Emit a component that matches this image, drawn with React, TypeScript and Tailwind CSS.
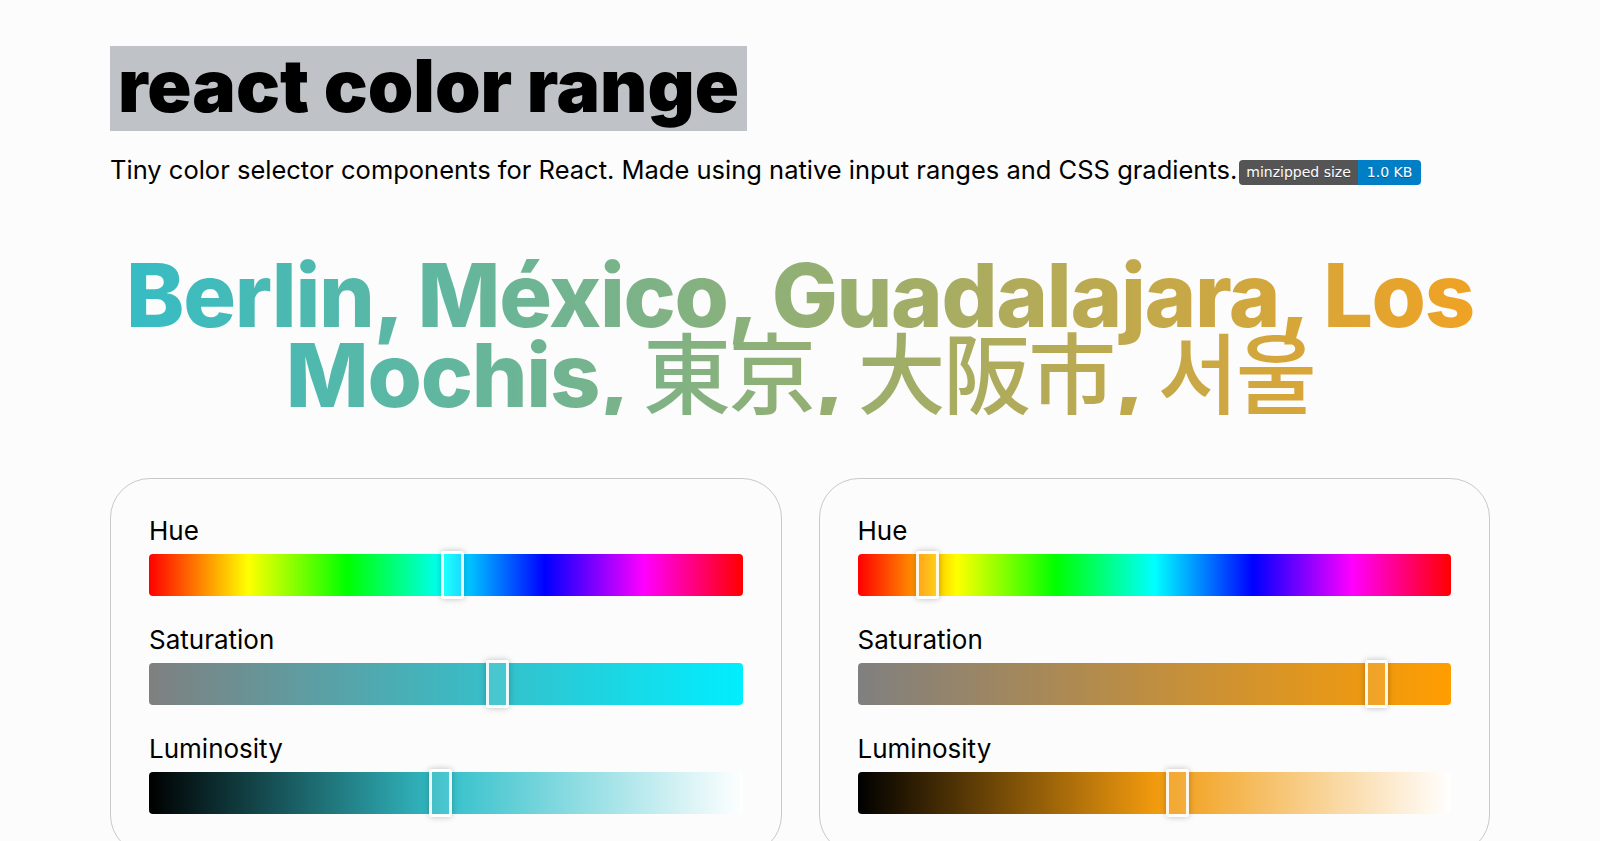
import { useState } from "react";

type Hsl = { h: number; s: number; l: number };

const HUE_TRACK =
  "linear-gradient(to right, hsl(0,100%,50%), hsl(60,100%,50%), hsl(120,100%,50%), hsl(180,100%,50%), hsl(240,100%,50%), hsl(300,100%,50%), hsl(360,100%,50%))";

const hsl = ({ h, s, l }: Hsl) => `hsl(${h}, ${s}%, ${l}%)`;

interface RangeProps {
  label: string;
  value: number;
  max: number;
  track: string;
  onChange: (v: number) => void;
}

function Range({ label, value, max, track, onChange }: RangeProps) {
  return (
    <label className="block mb-[28px] last:mb-0">
      <span className="block text-[26px] leading-[31px] mb-[8px] text-black">{label}</span>
      <input
        type="range"
        min={0}
        max={max}
        value={value}
        onChange={(e) => onChange(Number(e.target.value))}
        style={{ backgroundImage: track }}
        className="block w-full h-[42px] m-0 appearance-none rounded-[4px] outline-none cursor-pointer [&::-webkit-slider-thumb]:appearance-none [&::-webkit-slider-thumb]:w-[23px] [&::-webkit-slider-thumb]:h-[48px] [&::-webkit-slider-thumb]:rounded-[3px] [&::-webkit-slider-thumb]:border-[3px] [&::-webkit-slider-thumb]:border-solid [&::-webkit-slider-thumb]:border-white/90 [&::-webkit-slider-thumb]:bg-white/10 [&::-webkit-slider-thumb]:shadow-[0_0_6px_rgba(0,0,0,0.25)]"
      />
    </label>
  );
}

function ColorPicker({ color, onChange }: { color: Hsl; onChange: (c: Hsl) => void }) {
  const { h, s, l } = color;
  return (
    <div className="border border-[#c9c9cd] rounded-[40px] pt-[36px] px-[38px] pb-[40px]">
      <Range label="Hue" value={h} max={360} track={HUE_TRACK} onChange={(v) => onChange({ ...color, h: v })} />
      <Range
        label="Saturation"
        value={s}
        max={100}
        track={`linear-gradient(to right, hsl(${h},0%,50%), hsl(${h},100%,50%))`}
        onChange={(v) => onChange({ ...color, s: v })}
      />
      <Range
        label="Luminosity"
        value={l}
        max={100}
        track={`linear-gradient(to right, hsl(${h},${s}%,0%), hsl(${h},${s}%,50%), hsl(${h},${s}%,100%))`}
        onChange={(v) => onChange({ ...color, l: v })}
      />
    </div>
  );
}

export default function App() {
  const [from, setFrom] = useState<Hsl>({ h: 184, s: 59, l: 49 });
  const [to, setTo] = useState<Hsl>({ h: 37, s: 89, l: 54 });

  return (
    <div className="min-h-screen bg-[#fcfcfc] font-['Inter','Noto_Sans_CJK_JP','Noto_Sans_CJK_KR',sans-serif] text-black">
      <main className="px-[110px] pt-[46px] pb-10">
        <h1 className="inline-block bg-[#bfc3c7] px-[8px] pt-[4px] pb-[9px] text-[73px] leading-[72px] font-black">
          react color range
        </h1>
        <p className="mt-[23px] text-[25.5px] leading-[32px]">
          Tiny color selector components for React. Made using native input ranges and CSS gradients.
          <span className="inline-flex align-[2px] ml-[2px] rounded-[4px] overflow-hidden font-['DejaVu_Sans',sans-serif] text-[14px] leading-[25px] text-white [text-shadow:0_1px_0_rgba(1,1,1,0.3)]">
            <span className="bg-[#555] px-[7px]">minzipped size</span>
            <span className="bg-[#007ec6] px-[9px]">1.0 KB</span>
          </span>
        </p>

        <h2
          className="mt-[69px] text-center text-[88px] leading-[80px] font-extrabold tracking-[-0.015em] bg-clip-text text-transparent"
          style={{ backgroundImage: `linear-gradient(to right, ${hsl(from)}, ${hsl(to)})` }}
        >
          Berlin, México, Guadalajara, Los Mochis, <span className="font-medium tracking-[-0.03em]">東京</span>,{" "}
          <span className="font-medium tracking-[-0.03em]">大阪市</span>,{" "}
          <span className="font-medium tracking-[-0.03em]">서울</span>
        </h2>

        <div className="mt-[63px] grid grid-cols-2 gap-[37px]">
          <ColorPicker color={from} onChange={setFrom} />
          <ColorPicker color={to} onChange={setTo} />
        </div>
      </main>
    </div>
  );
}
